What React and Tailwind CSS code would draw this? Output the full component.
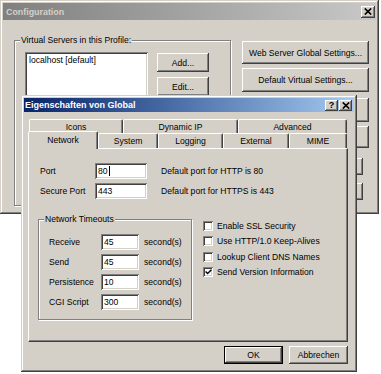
import React from "react";

const frame =
  "shadow-[inset_-1px_-1px_#404040,inset_1px_1px_#d4d0c8,inset_-2px_-2px_#808080,inset_2px_2px_#ffffff]";
const bevel =
  "shadow-[inset_-1px_-1px_#404040,inset_1px_1px_#ffffff,inset_-2px_-2px_#808080,inset_2px_2px_#d4d0c8]";
const sunken =
  "shadow-[inset_1px_1px_#808080,inset_-1px_-1px_#ffffff,inset_2px_2px_#404040,inset_-2px_-2px_#d4d0c8]";

function Button({ className = "", children }) {
  return (
    <div className={"flex items-center justify-center bg-[#d4d0c8] whitespace-nowrap " + bevel + " " + className}>
      {children}
    </div>
  );
}

function XIcon() {
  return (
    <svg width="8" height="7" viewBox="0 0 8 7">
      <path d="M0.8 0.5 L7.2 6.5 M7.2 0.5 L0.8 6.5" stroke="#000" strokeWidth="1.7" />
    </svg>
  );
}

function GroupBox({ label, className = "", children }) {
  return (
    <div className={"relative border border-[#808080] shadow-[inset_1px_1px_#ffffff,1px_1px_#ffffff] " + className}>
      <span className="absolute -top-[6px] left-[5px] bg-[#d4d0c8] px-[1px] leading-[10px] whitespace-nowrap">{label}</span>
      {children}
    </div>
  );
}

function Field({ className = "", children }) {
  return (
    <div className={"h-[16px] bg-white flex items-center pl-[3px] " + sunken + " " + className}>{children}</div>
  );
}

const tabBase =
  "flex items-center justify-center bg-[#d4d0c8] border-t border-l border-r border-t-white border-l-white border-r-[#404040] rounded-t-[2px] shadow-[inset_-1px_0_#808080] whitespace-nowrap";

function TimeoutRow({ label, value }) {
  return (
    <div className="flex items-center h-[16px]">
      <span className="w-[52px]">{label}</span>
      <Field className="w-[38px]">{value}</Field>
      <span className="ml-[5px]">second(s)</span>
    </div>
  );
}

function Check({ label, checked, className = "" }) {
  return (
    <div className={"flex items-center h-[10px] " + className}>
      <div className={"w-[10px] h-[10px] bg-white flex items-center justify-center " + sunken}>
        {checked ? (
          <svg width="7" height="6" viewBox="0 0 7 6">
            <path d="M0.6 2.6 L2.6 4.6 L6.4 0.8" stroke="#000" strokeWidth="1.4" fill="none" />
          </svg>
        ) : null}
      </div>
      <span className="ml-[4px] whitespace-nowrap">{label}</span>
    </div>
  );
}

export default function App() {
  return (
    <div className="relative w-[381px] h-[374px] bg-white overflow-hidden text-black text-[8.6px] leading-[10px] font-['Liberation_Sans',Arial,sans-serif]">
      {/* Background window: Configuration */}
      <div className={"absolute left-0 top-0 w-[379px] h-[214px] bg-[#d4d0c8] p-[3px] flex flex-col " + frame}>
        <div className="h-[17px] flex items-center justify-between pl-[3px] pr-[1px] bg-gradient-to-r from-[#808080] to-[#c8c8c8]">
          <span className="font-bold text-[8.9px] text-[#d4d0c8]">Configuration</span>
          <div className={"w-[14px] h-[12px] flex items-center justify-center bg-[#d4d0c8] " + bevel}>
            <XIcon />
          </div>
        </div>
        <div className="flex items-start">
          <GroupBox
            label="Virtual Servers in this Profile:"
            className="ml-[11px] mt-[20px] w-[217px] h-[166px] flex items-start pl-[10px] pt-[11px]"
          >
            <div className={"w-[123px] h-[148px] bg-white pl-[4px] pt-[3px] " + sunken}>localhost [default]</div>
            <div className="ml-[9px] mt-[1px] flex flex-col gap-[5px]">
              <Button className="w-[52px] h-[19px]">Add...</Button>
              <Button className="w-[52px] h-[19px]">Edit...</Button>
            </div>
          </GroupBox>
          <div className="ml-[11px] mt-[21px] flex flex-col items-end">
            <Button className="w-[127px] h-[23px]">Web Server Global Settings...</Button>
            <Button className="w-[127px] h-[24px] mt-[4px]">Default Virtual Settings...</Button>
            <Button className="w-[127px] h-[24px] mt-[6px]">Virtual Settings...</Button>
            <Button className="w-[127px] h-[22px] mt-[4px]">Settings...</Button>
            <Button className="w-[100px] h-[17px] mt-[10px] mr-[6px]">Start</Button>
            <Button className="w-[100px] h-[17px] mt-[8px] mr-[6px]">Stop</Button>
          </div>
        </div>
      </div>

      {/* Foreground dialog: Eigenschaften von Global */}
      <div className={"absolute left-[21px] top-[95px] w-[336px] h-[277px] bg-[#d4d0c8] p-[3px] flex flex-col " + frame}>
        <div className="h-[14px] flex items-center justify-between pl-[1px] pr-[2px] bg-gradient-to-r from-[#0a246a] to-[#a6caf0]">
          <span className="font-bold text-[9px] text-white">Eigenschaften von Global</span>
          <div className="flex gap-[1px]">
            <div className={"w-[13px] h-[11px] flex items-center justify-center bg-[#d4d0c8] font-bold text-[9px] leading-[9px] " + bevel}>
              ?
            </div>
            <div className={"w-[13px] h-[11px] flex items-center justify-center bg-[#d4d0c8] " + bevel}>
              <XIcon />
            </div>
          </div>
        </div>

        <div className="ml-[4px] mt-[7px] w-[320px] flex flex-col">
          {/* back row of tabs */}
          <div className="flex h-[14px] pl-[1px]">
            <div className={tabBase + " w-[94px] h-[14px]"}>Icons</div>
            <div className={tabBase + " w-[115px] h-[14px]"}>Dynamic IP</div>
            <div className={tabBase + " w-[109px] h-[14px]"}>Advanced</div>
          </div>
          {/* front row of tabs */}
          <div className="flex items-end h-[15px]">
            <div className={tabBase + " relative z-10 -mb-px w-[70px] h-[18px] pb-[1px]"}>Network</div>
            <div className={tabBase + " w-[60px] h-[15px]"}>System</div>
            <div className={tabBase + " w-[65px] h-[15px]"}>Logging</div>
            <div className={tabBase + " w-[66px] h-[15px]"}>External</div>
            <div className={tabBase + " w-[58px] h-[15px]"}>MIME</div>
          </div>
          {/* tab panel */}
          <div className="w-[320px] h-[194px] bg-[#d4d0c8] border border-t-white border-l-white border-r-[#404040] border-b-[#404040] shadow-[inset_-1px_-1px_#808080] flex flex-col pl-[9px] pt-[14px]">
            <div className="flex items-center h-[16px]">
              <span className="ml-[2px] w-[55px]">Port</span>
              <Field className="w-[52px]">
                80<span className="inline-block w-px h-[10px] bg-black ml-[1px]" />
              </Field>
              <span className="ml-[14px]">Default port for HTTP is 80</span>
            </div>
            <div className="flex items-center h-[16px] mt-[4px]">
              <span className="ml-[2px] w-[55px]">Secure Port</span>
              <Field className="w-[52px]">443</Field>
              <span className="ml-[14px]">Default port for HTTPS is 443</span>
            </div>
            <div className="flex items-start mt-[20px]">
              <GroupBox label="Network Timeouts" className="w-[154px] h-[101px] flex flex-col gap-[4px] pl-[10px] pt-[14px]">
                <TimeoutRow label="Receive" value="45" />
                <TimeoutRow label="Send" value="45" />
                <TimeoutRow label="Persistence" value="10" />
                <TimeoutRow label="CGI Script" value="300" />
              </GroupBox>
              <div className="ml-[11px] flex flex-col">
                <Check className="mt-[2px]" label="Enable SSL Security" />
                <Check className="mt-[5px]" label="Use HTTP/1.0 Keep-Alives" />
                <Check className="mt-[6px]" label="Lookup Client DNS Names" />
                <Check className="mt-[5px]" label="Send Version Information" checked />
              </div>
            </div>
          </div>
          {/* dialog buttons */}
          <div className="flex justify-end gap-[6px] mt-[4px]">
            <div className={"w-[59px] h-[18px] flex items-center justify-center bg-[#d4d0c8] border border-black " + bevel}>OK</div>
            <Button className="w-[59px] h-[18px]">Abbrechen</Button>
          </div>
        </div>
      </div>
    </div>
  );
}
